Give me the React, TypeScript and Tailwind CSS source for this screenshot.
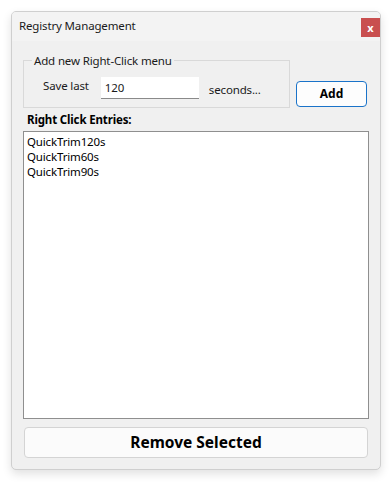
import React from "react";

const ENTRIES = ["QuickTrim120s", "QuickTrim60s", "QuickTrim90s"];

export default function App() {
  return (
    <div
      className="w-[392px] h-[482px] bg-white pt-[11px] pl-[11px]"
      style={{ fontFamily: '"Noto Sans", "Open Sans", Arial, sans-serif' }}
    >
      {/* Window */}
      <div className="w-[370px] h-[459px] flex flex-col bg-[#f0f0f0] border border-[#cfcfcf] rounded-[5px] shadow-[0_4px_10px_rgba(0,0,0,0.12)] overflow-hidden">
        {/* Title bar */}
        <div className="h-[29px] flex items-start justify-between bg-[#f3f3f3] shrink-0">
          <span className="pl-[7px] pt-[6px] text-[11.5px] tracking-[-0.15px] leading-[15px] text-[#1a1a1a]">
            Registry Management
          </span>
          <button className="mt-[6px] w-[19px] h-[19px] bg-[#c94f4f] text-white text-[11px] font-bold leading-none flex items-center justify-center">
            x
          </button>
        </div>

        {/* Body */}
        <div className="flex-1 flex flex-col px-[11px] pt-[12px] pb-[12px] text-[11.5px] tracking-[-0.15px]">
          <div className="flex items-end gap-[6px]">
            <fieldset className="w-[267px] h-[55px] border border-[#d9d9d9] px-[19px] flex items-center">
              <legend className="ml-[-11px] px-[2px] leading-[15px] text-[#1a1a1a]">
                Add new Right-Click menu
              </legend>
              <div className="flex items-center mt-[0px]">
                <span className="text-[#1a1a1a] mt-[-3px]">Save last</span>
                <input
                  defaultValue="120"
                  className="ml-[12px] w-[98px] h-[22px] bg-white border-b border-[#8a8a8a] px-[4px] text-[#1a1a1a] outline-none"
                />
                <span className="ml-[10px] text-[#1a1a1a] mt-[4px]">seconds...</span>
              </div>
            </fieldset>
            <button className="w-[71px] h-[26px] mb-[1px] bg-[#fdfdfd] border border-[#1a73c9] rounded-[4px] text-[12px] tracking-normal font-bold text-black">
              Add
            </button>
          </div>

          <div className="mt-[4px] pl-[4px] font-bold leading-[15px] text-black">
            Right Click Entries:
          </div>

          <div className="mt-[4px] h-[288px] bg-white border border-[#8f8f8f] pt-[2px] px-[3px]">
            {ENTRIES.map((e) => (
              <div key={e} className="leading-[15px] text-black">
                {e}
              </div>
            ))}
          </div>

          <button className="mt-[8px] h-[31px] w-[344px] ml-[1px] bg-[#fbfbfb] border border-[#d4d4d4] rounded-[4px] text-[15.5px] tracking-normal font-bold text-black">
            Remove Selected
          </button>
        </div>
      </div>
    </div>
  );
}
